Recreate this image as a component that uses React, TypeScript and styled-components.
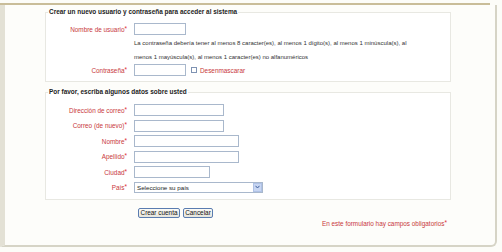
import React from 'react'
import styled, { createGlobalStyle } from 'styled-components'

const GlobalStyle = createGlobalStyle`
  html, body {
    margin: 0;
    padding: 0;
    background: #fcfcf8;
    font-family: "Liberation Sans", Arial, sans-serif;
  }
`

const Page = styled.div`
  width: 502px;
  height: 252px;
  overflow: hidden;
  background: #fcfcf8;
`

const TopRule = styled.div`
  width: 490px;
  height: 2px;
  margin-top: 3px;
  background: #c9bd99;
`

const Frame = styled.div`
  box-sizing: border-box;
  width: 497px;
  height: 242px;
  border-left: 5px solid #e3e1d5;
  border-right: 2px solid #d6d4c6;
  border-bottom: 2px solid #d6d4c6;
  border-bottom-right-radius: 6px;
  background: #fdfdfa;
  padding-top: 3px;
`

const Fieldset = styled.fieldset<{ $top: number; $pt: number; $pb: number }>`
  box-sizing: border-box;
  width: 406px;
  margin: ${({ $top }) => $top}px 0 0 40px;
  padding: ${({ $pt }) => $pt}px 0 ${({ $pb }) => $pb}px 0;
  border: 1px solid #e8e8e2;
  background: #fff;
  min-inline-size: 0;
`

const Legend = styled.legend`
  margin-left: 2px;
  padding: 0 1px;
  font-size: 6.45px;
  line-height: 8px;
  font-weight: bold;
  color: #222;
`

const Rows = styled.div<{ $gap: number }>`
  display: flex;
  flex-direction: column;
  gap: ${({ $gap }) => $gap}px;
`

const Row = styled.div<{ $h?: number }>`
  display: flex;
  align-items: center;
  height: ${({ $h }) => $h ?? 12}px;
`

const Label = styled.label`
  width: 81px;
  margin-right: 7px;
  text-align: right;
  font-size: 6.4px;
  color: #c8383c;
  white-space: nowrap;
`

const Req = styled.span`
  color: #e0282e;
  font-size: 6.4px;
  position: relative;
  top: -1px;
`

const TextInput = styled.div<{ $w: number }>`
  box-sizing: border-box;
  width: ${({ $w }) => $w}px;
  height: 12px;
  border: 1px solid #a9b8cc;
  background: #fff;
`

const Help = styled.div`
  margin: 1px 0 0 88px;
  font-size: 6px;
  line-height: 14px;
  color: #333;
  width: 280px;
`

const Check = styled.span`
  box-sizing: border-box;
  display: inline-block;
  width: 6px;
  height: 6px;
  margin-left: 5px;
  border: 1px solid #7f93b3;
  background: #fff;
`

const CheckText = styled.span`
  margin-left: 3px;
  font-size: 6.4px;
  color: #c8383c;
`

const Select = styled.div`
  box-sizing: border-box;
  width: 129px;
  height: 11px;
  border: 1px solid #a9b8cc;
  background: #fff;
  display: flex;
  align-items: center;
  justify-content: space-between;
  font-size: 6.2px;
  color: #222;
  padding-left: 2px;
`

const Arrow = styled.span`
  box-sizing: border-box;
  width: 9px;
  height: 9px;
  background: #c8d6f2;
  border: 1px solid #b0c2e6;
  display: flex;
  align-items: center;
  justify-content: center;
`

const Buttons = styled.div`
  display: flex;
  gap: 3px;
  margin: 8px 0 0 133px;
`

const Button = styled.button<{ $w: number }>`
  box-sizing: border-box;
  width: ${({ $w }) => $w}px;
  height: 10px;
  padding: 0;
  font-family: "Liberation Sans", Arial, sans-serif;
  font-size: 6.4px;
  line-height: 8px;
  color: #111;
  background: linear-gradient(#fbfbf8, #e6e5dc);
  border: 1px solid #5a7cb0;
  border-radius: 2px;
`

const Note = styled.div`
  width: 402px;
  margin: 2px 0 0 40px;
  text-align: right;
  font-size: 6.4px;
  line-height: 8px;
  color: #c8383c;
`

export default function App() {
  return (
    <Page>
      <GlobalStyle />
      <TopRule />
      <Frame>
        <Fieldset $top={0} $pt={7} $pb={5}>
          <Legend>Crear un nuevo usuario y contraseña para acceder al sistema</Legend>
          <Row>
            <Label>Nombre de usuario<Req>*</Req></Label>
            <TextInput $w={52} />
          </Row>
          <Help>
            La contraseña debería tener al menos 8 caracter(es), al menos 1 dígito(s), al menos 1 minúscula(s), al
            menos 1 mayúscula(s), al menos 1 caracter(es) no alfanuméricos
          </Help>
          <Row>
            <Label>Contraseña<Req>*</Req></Label>
            <TextInput $w={52} />
            <Check />
            <CheckText>Desenmascarar</CheckText>
          </Row>
        </Fieldset>

        <Fieldset $top={6} $pt={8} $pb={6}>
          <Legend>Por favor, escriba algunos datos sobre usted</Legend>
          <Rows $gap={3.5}>
            <Row>
              <Label>Dirección de correo<Req>*</Req></Label>
              <TextInput $w={90} />
            </Row>
            <Row>
              <Label>Correo (de nuevo)<Req>*</Req></Label>
              <TextInput $w={90} />
            </Row>
            <Row>
              <Label>Nombre<Req>*</Req></Label>
              <TextInput $w={105} />
            </Row>
            <Row>
              <Label>Apellido<Req>*</Req></Label>
              <TextInput $w={105} />
            </Row>
            <Row>
              <Label>Ciudad<Req>*</Req></Label>
              <TextInput $w={76} />
            </Row>
            <Row $h={11}>
              <Label>País<Req>*</Req></Label>
              <Select>
                <span>Seleccione su país</span>
                <Arrow>
                  <svg width="5" height="4" viewBox="0 0 5 4">
                    <path d="M0.5 0.8 L2.5 3 L4.5 0.8" fill="none" stroke="#3f5f9c" strokeWidth="1" />
                  </svg>
                </Arrow>
              </Select>
            </Row>
          </Rows>
        </Fieldset>

        <Buttons>
          <Button $w={42}>Crear cuenta</Button>
          <Button $w={30}>Cancelar</Button>
        </Buttons>
        <Note>
          En este formulario hay campos obligatorios<Req>*</Req>
        </Note>
      </Frame>
    </Page>
  )
}
